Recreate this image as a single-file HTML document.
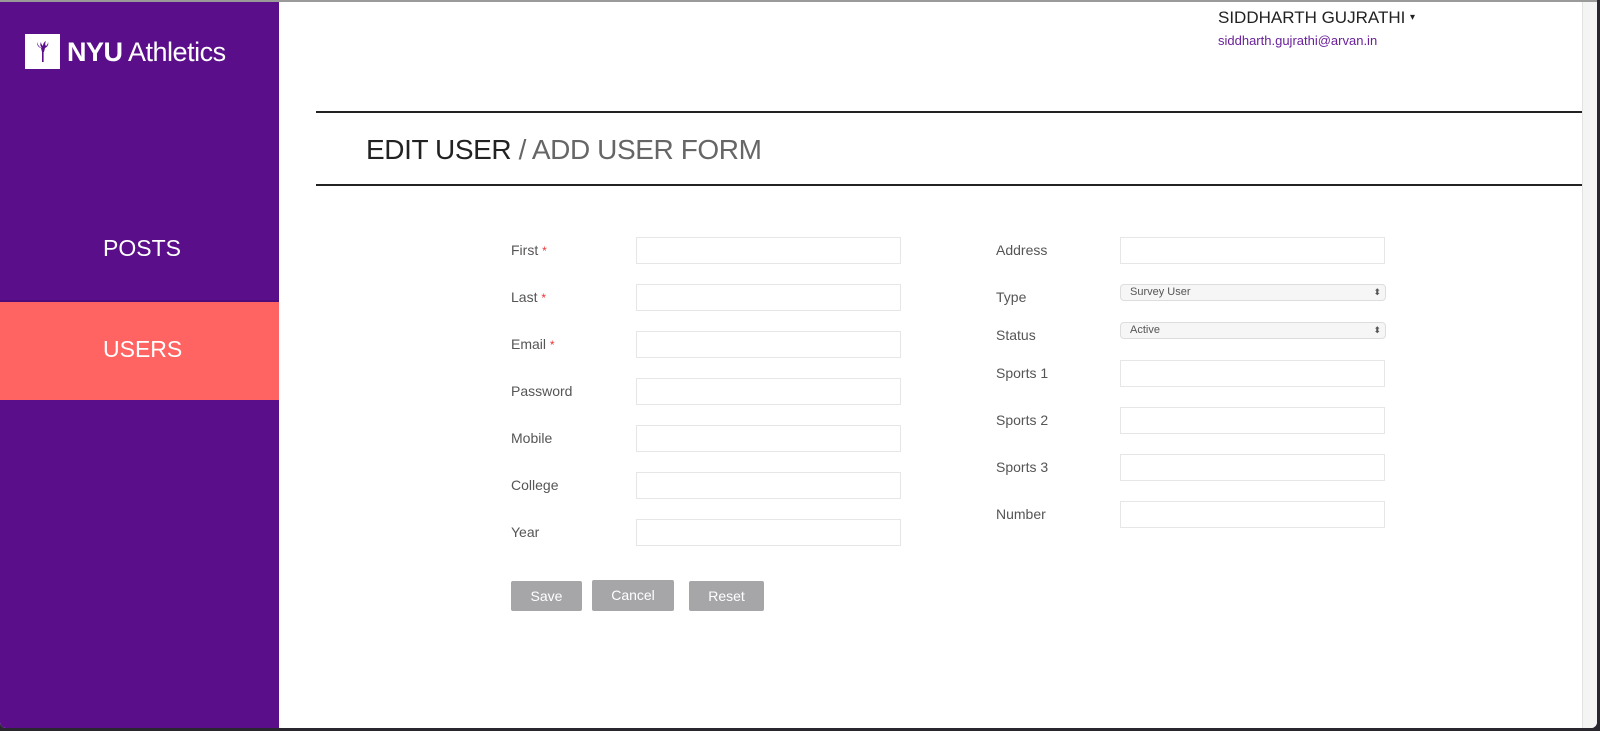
<!DOCTYPE html>
<html><head><meta charset="utf-8"><style>
*{margin:0;padding:0;box-sizing:border-box}
body{width:1600px;height:731px;overflow:hidden;background:#2a2630;font-family:"Liberation Sans",sans-serif;position:relative}
.win{position:absolute;left:0;top:0;width:1597px;height:728px;background:#fff;border-top:2px solid #9a9a9a;overflow:hidden;border-radius:0 0 6px 6px}
.side{position:absolute;left:0;top:0;width:279px;height:728px;background:#5a0e8a}
.logo{position:absolute;left:25px;top:32px;width:35px;height:35px;background:#fff}
.brand{position:absolute;left:67px;top:31px;color:#fff;font-size:27px;line-height:38px;letter-spacing:-0.5px}
.brand b{font-weight:bold}
.nav{position:absolute;left:0;width:279px;color:#fff;font-size:23px;padding-left:103px}
.a{position:absolute;font-size:14px;color:#555}
.in{position:absolute;width:265px;height:27px;border:1px solid #e6e6e6;background:#fff}
.sel{position:absolute;width:266px;height:17px;border:1px solid #ddd;border-radius:4px;background:#f6f6f6;font-size:11px;color:#555;padding-left:9px;line-height:15px}
.sel:after{content:"\2B0D";position:absolute;right:4px;top:0;font-size:9px;color:#555}
.btn{position:absolute;height:30px;background:#a6a6a9;color:#fff;font-size:14px;text-align:center;line-height:30px;border-radius:2px}
.req{color:#e33;font-size:12px}
</style></head><body>
<div class="win">
<div class="side">
<div class="logo"><svg width="35" height="35" viewBox="0 0 35 35"><g fill="#5a0e8a"><path d="M16 14h4l-1 4h-2z"/><rect x="17" y="18" width="1.6" height="10"/><path d="M12 8c1 3 2 5 5 6-2-2-2-4-1-6 0 2 1 3 2 4 0-2 1-4 3-5-1 2-1 4 0 5 1-1 2-2 2-4 1 3-1 5-3 6h-4c-3-1-4-3-4-6z"/></g></svg></div>
<div class="brand"><b>NYU</b> Athletics</div>
<div class="nav" style="top:229px;line-height:34px">POSTS</div>
<div class="nav" style="top:298px;height:100px;background:#ff6462;line-height:94px;border-top:2px solid #4f0a7c">USERS</div>
</div>
<div style="position:absolute;left:1218px;top:6px;font-size:17px;color:#222">SIDDHARTH GUJRATHI <span style="font-size:10px;vertical-align:3px">&#9662;</span></div>
<div style="position:absolute;left:1218px;top:31px;font-size:13px;color:#6a1f9a">siddharth.gujrathi@arvan.in</div>
<div style="position:absolute;left:316px;top:109px;width:1266px;height:2px;background:#222"></div>
<div style="position:absolute;left:366px;top:132px;font-size:28px;color:#222;letter-spacing:-0.4px">EDIT USER <span style="color:#666">/ ADD USER FORM</span></div>
<div style="position:absolute;left:316px;top:182px;width:1266px;height:2px;background:#222"></div>
<div style="position:absolute;left:1582px;top:0;width:15px;height:728px;background:#f4f4f4;border-left:1px solid #e2e2e2"></div>

<div class="a" style="left:511px;top:240px">First <span class="req">*</span></div><div class="in" style="left:636px;top:235px"></div>
<div class="a" style="left:511px;top:287px">Last <span class="req">*</span></div><div class="in" style="left:636px;top:282px"></div>
<div class="a" style="left:511px;top:334px">Email <span class="req">*</span></div><div class="in" style="left:636px;top:329px"></div>
<div class="a" style="left:511px;top:381px">Password</div><div class="in" style="left:636px;top:376px"></div>
<div class="a" style="left:511px;top:428px">Mobile</div><div class="in" style="left:636px;top:423px"></div>
<div class="a" style="left:511px;top:475px">College</div><div class="in" style="left:636px;top:470px"></div>
<div class="a" style="left:511px;top:522px">Year</div><div class="in" style="left:636px;top:517px"></div>

<div class="a" style="left:996px;top:240px">Address</div><div class="in" style="left:1120px;top:235px"></div>
<div class="a" style="left:996px;top:287px">Type</div><div class="sel" style="left:1120px;top:282px">Survey User</div>
<div class="a" style="left:996px;top:325px">Status</div><div class="sel" style="left:1120px;top:320px">Active</div>
<div class="a" style="left:996px;top:363px">Sports 1</div><div class="in" style="left:1120px;top:358px"></div>
<div class="a" style="left:996px;top:410px">Sports 2</div><div class="in" style="left:1120px;top:405px"></div>
<div class="a" style="left:996px;top:457px">Sports 3</div><div class="in" style="left:1120px;top:452px"></div>
<div class="a" style="left:996px;top:504px">Number</div><div class="in" style="left:1120px;top:499px"></div>

<div class="btn" style="left:511px;top:579px;width:71px">Save</div>
<div class="btn" style="left:592px;top:578px;width:82px;height:31px">Cancel</div>
<div class="btn" style="left:689px;top:579px;width:75px">Reset</div>
</div>
</body></html>
